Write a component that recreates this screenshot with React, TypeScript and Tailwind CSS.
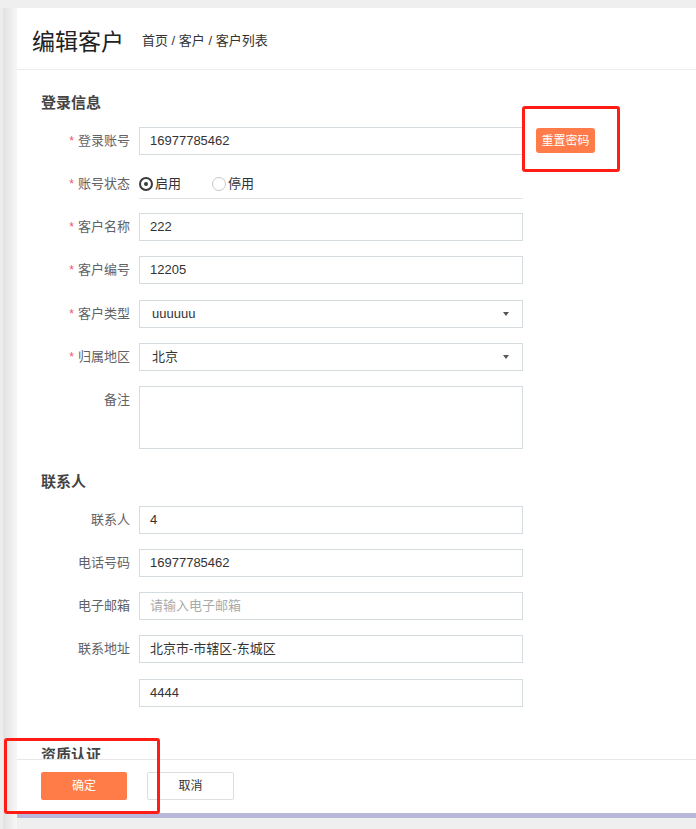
import React from "react";

const font = { fontFamily: '"Liberation Sans", Arial, "Noto Sans CJK SC", sans-serif' };

function Label({ text, required }: { text: string; required?: boolean }) {
  return (
    <div className="w-[113px] shrink-0 text-right text-[13px] leading-[28px] text-[#5f6266]">
      {required && <span className="text-[#f0506e] mr-[4px] text-[12px]">*</span>}
      {text}
    </div>
  );
}

function InputRow({
  label,
  value,
  required,
  placeholder,
  select,
  extra,
  className = "mb-[15px]",
}: {
  label: string;
  value?: string;
  required?: boolean;
  placeholder?: string;
  select?: boolean;
  extra?: React.ReactNode;
  className?: string;
}) {
  return (
    <div className={"flex items-start " + className}>
      <Label text={label} required={required} />
      <div className="ml-[9px] w-[384px] h-[28px] border border-[#d4dcdf] bg-white flex items-center justify-between px-[10px] text-[13px]">
        {value ? (
          <span className={"text-[#333] " + (select ? "pl-[2px]" : "")}>{value}</span>
        ) : (
          <span className="text-[#aaa]">{placeholder}</span>
        )}
        {select && (
          <span className="w-0 h-0 border-l-[3.5px] border-r-[3.5px] border-t-[4px] border-l-transparent border-r-transparent border-t-[#555] mr-[3px]" />
        )}
      </div>
      {extra}
    </div>
  );
}

export default function App() {
  return (
    <div className="relative w-[696px] h-[829px] bg-[#efefef] flex flex-col overflow-hidden" style={font}>
      <div className="h-[8px] shrink-0" />
      <div className="flex flex-1 min-h-0">
        <div className="w-[17px] shrink-0 flex">
          <div className="w-[3px] bg-[#ededed]" />
          <div className="flex-1 bg-gradient-to-r from-[#e1e1e1] to-[#f7f7f7]" />
        </div>
        <div className="flex-1 flex flex-col min-w-0">
          <div className="bg-white h-[805px] flex flex-col">
            {/* header */}
            <div className="h-[62px] shrink-0 border-b border-[#ececec] flex items-center pl-[15px] pt-[4px]">
              <span className="text-[23px] text-[#222] leading-none" style={{ fontFamily: '"Noto Sans CJK SC", sans-serif' }}>
                编辑客户
              </span>
              <span className="ml-[18px] text-[13px] text-[#333]">首页 / 客户 / 客户列表</span>
            </div>
            {/* content */}
            <div className="flex-1 min-h-0 overflow-hidden pt-[23px]">
              <div className="pl-[24px] text-[15px] leading-[20px] font-bold text-[#444] mb-[14px]">登录信息</div>
              <InputRow
                label="登录账号"
                required
                value="16977785462"
                extra={
                  <button className="ml-[13px] mt-[1px] w-[59px] h-[25px] rounded-[3px] bg-[#ff7b4a] text-white text-[12px]">
                    重置密码
                  </button>
                }
              />
              <div className="flex items-start mb-[14px]">
                <Label text="账号状态" required />
                <div className="ml-[9px] w-[384px] h-[29px] border-b border-[#dde3e6] flex items-center text-[13px] text-[#333]">
                  <span className="w-[14px] h-[14px] rounded-full border-[2px] border-[#3a3a3a] flex items-center justify-center">
                    <span className="w-[4px] h-[4px] rounded-full bg-[#3a3a3a]" />
                  </span>
                  <span className="ml-[2px]">启用</span>
                  <span className="ml-[31px] w-[14px] h-[14px] rounded-full border border-[#c8c8c8]" />
                  <span className="ml-[2px]">停用</span>
                </div>
              </div>
              <InputRow label="客户名称" required value="222" />
              <InputRow label="客户编号" required value="12205" className="mb-[16px]" />
              <InputRow label="客户类型" required value="uuuuuu" select />
              <InputRow label="归属地区" required value="北京" select />
              <div className="flex items-start mb-[23px]">
                <Label text="备注" />
                <div className="ml-[9px] w-[384px] h-[63px] border border-[#d4dcdf]" />
              </div>
              <div className="pl-[24px] text-[15px] leading-[20px] font-bold text-[#444] mb-[14px]">联系人</div>
              <InputRow label="联系人" value="4" />
              <InputRow label="电话号码" value="16977785462" />
              <InputRow label="电子邮箱" placeholder="请输入电子邮箱" />
              <InputRow label="联系地址" value="北京市-市辖区-东城区" className="mb-[16px]" />
              <InputRow label="" value="4444" className="mb-[38px]" />
              <div className="pl-[24px] text-[15px] leading-[20px] font-bold text-[#444]">资质认证</div>
            </div>
            {/* footer */}
            <div className="h-[54px] shrink-0 border-t border-[#e8e8e8] flex items-start pt-[12px] pl-[24px] gap-[20px]">
              <button className="w-[86px] h-[28px] rounded-[2px] bg-[#ff7b48] text-white text-[12px]">确定</button>
              <button className="w-[87px] h-[28px] rounded-[2px] bg-white border border-[#dcdfe0] text-[#333] text-[12px]">
                取消
              </button>
            </div>
          </div>
          <div className="h-[5px] bg-[#b9b7da] shrink-0" />
          <div className="flex-1 bg-[#efefef]" />
        </div>
      </div>
      {/* red annotation boxes */}
      <div className="absolute left-[522px] top-[106px] w-[98px] h-[66px] border-[3px] border-[#ff1d14] rounded-[3px] pointer-events-none" />
      <div className="absolute left-[4px] top-[738px] w-[156px] h-[76px] border-[3px] border-[#ff1d14] rounded-[3px] pointer-events-none" />
    </div>
  );
}
